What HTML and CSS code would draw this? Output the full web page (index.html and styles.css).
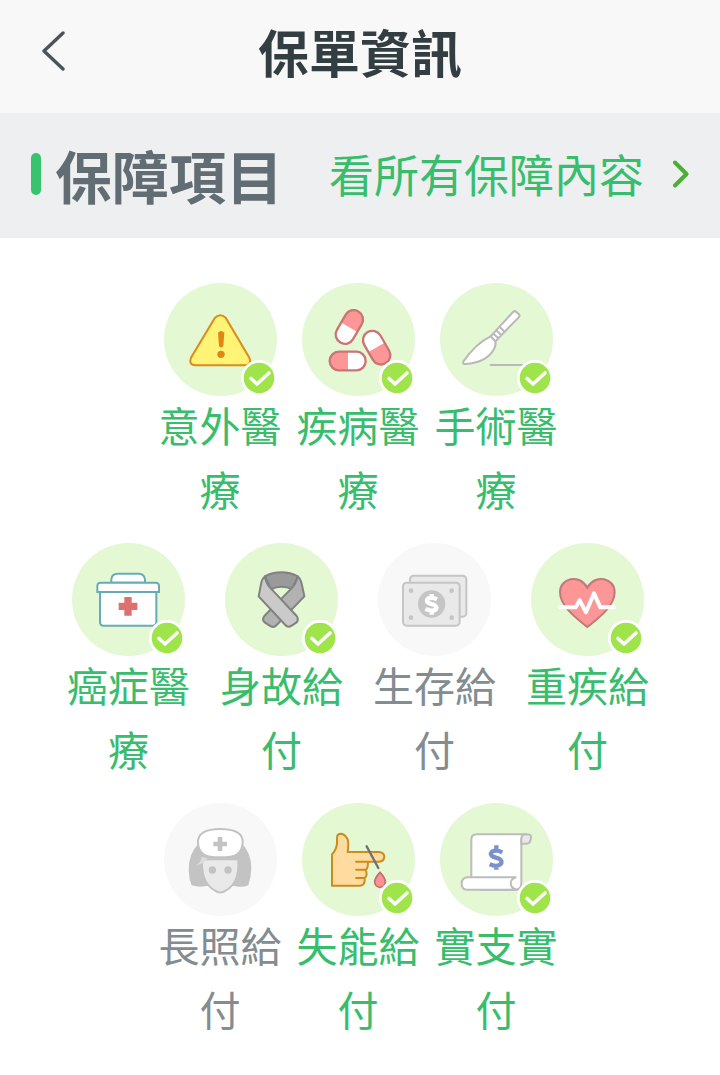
FILE: index.html
```html
<!DOCTYPE html>
<html lang="zh-Hant">
<head>
<meta charset="utf-8">
<meta name="viewport" content="width=device-width, initial-scale=1">
<title>保單資訊</title>
<link rel="stylesheet" href="styles.css">
</head>
<body>
<svg class="defs" aria-hidden="true">
  <symbol id="badge" viewBox="0 0 36 36">
    <circle cx="18" cy="18" r="18" fill="#fff"/>
    <circle cx="18" cy="18" r="15.3" fill="#9fe44a"/>
    <path d="M10 18.500l6 5.500L28 13" fill="none" stroke="#fff" stroke-width="3.600" stroke-linecap="round" stroke-linejoin="round"/>
  </symbol>
  <symbol id="pill" viewBox="-60 -34 120 68">
    <rect x="-55" y="-28" width="110" height="56" rx="28" fill="#fff"/>
    <path d="M1-28H-27A28 28 0 0 0-27 28H1Z" fill="#fd9797"/>
    <rect x="-54" y="-28" width="108" height="56" rx="28" fill="none" stroke="#cb7474" stroke-width="7"/>
  </symbol>
</svg>
<header class="topbar">
  <button class="back" type="button" aria-label="返回">
    <svg width="24" height="40" viewBox="0 0 24 40"><path d="M21 2L2 20L21 38" fill="none" stroke="#4c5457" stroke-width="3.4" stroke-linecap="round" stroke-linejoin="round"/></svg>
  </button>
  <h1 class="title">保單資訊</h1>
</header>
<section class="section-head">
  <h2 class="section-title">保障項目</h2>
  <a class="more" href="#all">看所有保障內容
    <svg width="18" height="28" viewBox="0 0 18 28" aria-hidden="true"><path d="M3 2.500L14.500 14L3 25.500" fill="none" stroke="#4bae35" stroke-width="4" stroke-linecap="round" stroke-linejoin="round"/></svg>
  </a>
</section>
<main class="coverage">
  <ul class="row">
    <li class="item">
      <div class="icon">
        <svg class="art" viewBox="28 24 339 339"><path d="M181 128Q197 114 213 128L284 248Q292 270 270 271H122Q101 270 109 248Z" fill="#fff475" stroke="#dc8c1b" stroke-width="6"/><path d="M190 173Q199 163 209 173L206 213Q199 222 193 213Z" fill="#df8712"/><circle cx="199" cy="238" r="11" fill="#df8712"/></svg>
        <svg class="badge"><use href="#badge"/></svg>
      </div>
      <span class="label">意外醫療</span>
    </li>
    <li class="item">
      <div class="icon">
        <svg class="art" viewBox="28 24 339 339">
          <use href="#pill" x="-60" y="-34" width="120" height="68" transform="translate(165 258)"/>
          <use href="#pill" x="-60" y="-34" width="120" height="68" transform="translate(170 156) rotate(-240) scale(-1 1) rotate(180)"/>
          <use href="#pill" x="-60" y="-34" width="120" height="68" transform="translate(252 218) rotate(240)"/>
        </svg>
        <svg class="badge"><use href="#badge"/></svg>
      </div>
      <span class="label">疾病醫療</span>
    </li>
    <li class="item">
      <div class="icon">
        <svg class="art" viewBox="28 24 339 339"><g stroke="#b9b9b9" stroke-width="6" stroke-linejoin="round" stroke-linecap="round"><path d="M180 184L247 111Q252 106 257 111L264 117Q269 122 264 127L194 199Z" fill="#fff"/><path d="M180 184Q135 205 98 260Q95 268 104 267Q168 263 190 222Q197 211 194 199Z" fill="#fff"/><path d="M188 176L203 190M197 166L212 180M207 156L222 170" fill="none"/><path d="M180 270H275"/></g></svg>
        <svg class="badge"><use href="#badge"/></svg>
      </div>
      <span class="label">手術醫療</span>
    </li>
  </ul>
  <ul class="row row-wide">
    <li class="item">
      <div class="icon">
        <svg class="art" viewBox="28 24 339 339"><g fill="#fff" stroke="#68abb4" stroke-width="6"><path d="M146 143V133Q147 116 165 116H228Q245 116 247 133V143Z"/><path d="M112 171H281V260Q281 272 270 272H123Q112 272 112 260Z"/><path d="M104 171V153Q104 143 115 143H278Q289 143 289 153V171Z"/></g><path d="M185 186H207V203H224V225H207V242H185V225H168V203H185Z" fill="#df7070"/></svg>
        <svg class="badge"><use href="#badge"/></svg>
      </div>
      <span class="label">癌症醫療</span>
    </li>
    <li class="item">
      <div class="icon">
        <svg class="art" viewBox="28 24 339 339"><g stroke="#818181" stroke-width="6" stroke-linejoin="round"><path d="M148 124Q170 112 197 112Q224 112 246 124L230 163Q197 148 166 163Z" fill="#9a9a9a"/><path d="M246 124Q254 130 257 142L266 184L183 270Q173 280 162 272L147 262Q138 254 146 243L224 164Q242 146 246 124Z" fill="#b2b2b2"/><path d="M148 124Q140 130 137 142L129 184L209 270Q217 279 228 272L243 262Q250 253 243 243L169 164Q150 146 148 124Z" fill="#cacaca"/></g></svg>
        <svg class="badge"><use href="#badge"/></svg>
      </div>
      <span class="label">身故給付</span>
    </li>
    <li class="item is-off">
      <div class="icon">
        <svg class="art" viewBox="28 24 339 339"><g fill="#e9e9e9" stroke="#c5c5c5" stroke-width="6"><rect x="124" y="122" width="169" height="123" rx="11"/><rect x="103" y="143" width="170" height="129" rx="11"/></g><g fill="#c5c5c5"><circle cx="189" cy="207" r="41"/><circle cx="127" cy="167" r="7"/><circle cx="249" cy="167" r="7"/><circle cx="127" cy="248" r="7"/><circle cx="249" cy="248" r="7"/></g><path d="M205 193Q188 185 178 191Q170 198 180 204L197 210Q209 218 199 225Q189 230 170 222M189 177V190M189 226V239" fill="none" stroke="#fff" stroke-width="13"/></svg>
      </div>
      <span class="label">生存給付</span>
    </li>
    <li class="item">
      <div class="icon">
        <svg class="art" viewBox="28 24 339 339"><path d="M197 276C170 254 115 216 115 171C115 130 172 114 197 158C222 114 279 130 279 171C279 216 224 254 197 276Z" fill="#fd9696" stroke="#bd7b7b" stroke-width="6"/><path d="M116 217H162L174 196L193 232L217 175L236 217H277" fill="none" stroke="#fff" stroke-width="12" stroke-linecap="round" stroke-linejoin="round"/></svg>
        <svg class="badge"><use href="#badge"/></svg>
      </div>
      <span class="label">重疾給付</span>
    </li>
  </ul>
  <ul class="row">
    <li class="item is-off">
      <div class="icon">
        <svg class="art" viewBox="28 24 339 339"><path d="M133 145Q101 176 102 227Q103 252 111 271Q136 278 153 273H241Q262 279 281 271Q289 249 290 220Q290 174 261 145Z" fill="#c3c3c3"/><path d="M142 193H251Q255 264 214 286Q197 299 180 286Q139 264 142 193Z" fill="#e9e9e9" stroke="#c3c3c3" stroke-width="6"/><path d="M122 212Q137 204 142 186L158 190Q148 207 122 212Z" fill="#dcdcdc"/><path d="M130 145C127 115 154 102 197 102C240 102 267 115 264 145C261 174 247 187 197 187C147 187 133 174 130 145Z" fill="#fff" stroke="#c3c3c3" stroke-width="6"/><path d="M189 126H203V140H217V154H203V168H189V154H176V140H189Z" fill="#c3c3c3"/><circle cx="173" cy="225" r="11" fill="#c3c3c3"/><circle cx="220" cy="225" r="11" fill="#c3c3c3"/></svg>
      </div>
      <span class="label">長照給付</span>
    </li>
    <li class="item">
      <div class="icon">
        <svg class="art" viewBox="28 24 339 339"><path d="M118 272V178Q131 165 133 146V128Q133 116 145 116Q157 117 165 133Q169 145 165 171H260Q275 173 275 186Q273 199 260 200H226Q226 224 218 224Q222 229 222 237Q221 246 216 250Q218 272 202 272Z" fill="#ffdb9f" stroke="#c98c1d" stroke-width="6" stroke-linejoin="round"/><path d="M188 200H225M188 224H219M188 249H216" stroke="#c98c1d" stroke-width="6"/><path d="M222 154L257 219" stroke="#717171" stroke-width="7" stroke-linecap="round"/><path d="M262 232Q246 249 246 261A16 16 0 0 0 278 261Q278 249 262 232Z" fill="#fd9292" stroke="#bd7070" stroke-width="5"/></svg>
        <svg class="badge"><use href="#badge"/></svg>
      </div>
      <span class="label">失能給付</span>
    </li>
    <li class="item">
      <div class="icon">
        <svg class="art" viewBox="28 24 339 339"><g stroke="#bcbcbc" stroke-width="6" stroke-linejoin="round"><path d="M122 248V134Q122 118 139 118H285Q272 119 272 136V266Q271 284 255 284H150Z" fill="#fff"/><path d="M285 118Q301 118 301 125Q301 146 286 146H272V132Q273 119 285 118Z" fill="#e9e9e9"/><path d="M255 247H110Q93 249 93 266Q93 284 110 284H258Q241 280 240 266Q240 252 255 247Z" fill="#fff"/></g><path d="M215 172Q197 163 184 170Q176 179 187 185L205 191Q218 199 209 208Q198 217 177 208M197 151V167M197 210V224" fill="none" stroke="#7b91cd" stroke-width="13"/></svg>
        <svg class="badge"><use href="#badge"/></svg>
      </div>
      <span class="label">實支實付</span>
    </li>
  </ul>
</main>
</body>
</html>
```
FILE: styles.css
```css
* {
  box-sizing: border-box;
}

body {
  margin: 0;
  background: #fff;
  color: #333e42;
  font-family: "Noto Sans CJK TC", "Noto Sans", sans-serif;
}

.defs {
  position: absolute;
  width: 0;
  height: 0;
}

.topbar {
  display: grid;
  grid-template-columns: 68px 1fr 68px;
  align-items: center;
  height: 113px;
  padding: 0 20px 12px;
  background: #f8f8f8;
}

.back {
  display: flex;
  justify-content: center;
  padding: 8px 0;
  border: 0;
  background: none;
  cursor: pointer;
}

.title {
  margin: 0;
  font-size: 51px;
  line-height: 72px;
  font-weight: 700;
  text-align: center;
}

.section-head {
  display: flex;
  align-items: center;
  justify-content: space-between;
  min-height: 125px;
  padding: 0 30px 4px 31px;
  background: #eeeff1;
}

.section-title {
  display: flex;
  align-items: center;
  gap: 14px;
  margin: 0;
  color: #616d73;
  font-size: 57px;
  line-height: 80px;
  font-weight: 700;
}

.section-title::before {
  content: "";
  width: 10px;
  height: 42px;
  border-radius: 5px;
  background: #38c46c;
}

.more {
  display: flex;
  align-items: center;
  gap: 28px;
  color: #38bd6d;
  font-size: 45px;
  line-height: 64px;
  text-decoration: none;
}

.coverage {
  display: flex;
  flex-direction: column;
  gap: 23px;
  padding: 45px 4px 32px 0;
}

.row {
  display: flex;
  justify-content: center;
  gap: 14px;
  margin: 0;
  padding: 0;
  list-style: none;
}

.row-wide {
  gap: 29px;
}

.item {
  display: flex;
  flex-direction: column;
  align-items: center;
  width: 124px;
  color: #38bd6d;
}

.is-off {
  color: #838c91;
}

.icon {
  position: relative;
  width: 113px;
  height: 113px;
  border-radius: 50%;
  background: #e3f8d3;
}

.is-off .icon {
  background: #f8f8f8;
}

.art {
  display: block;
  width: 100%;
  height: 100%;
}

.badge {
  position: absolute;
  right: 0;
  bottom: 0;
  width: 36px;
  height: 36px;
}

.label {
  margin-top: -4px;
  font-size: 41px;
  line-height: 64px;
  text-align: center;
  word-break: break-all;
}
```
